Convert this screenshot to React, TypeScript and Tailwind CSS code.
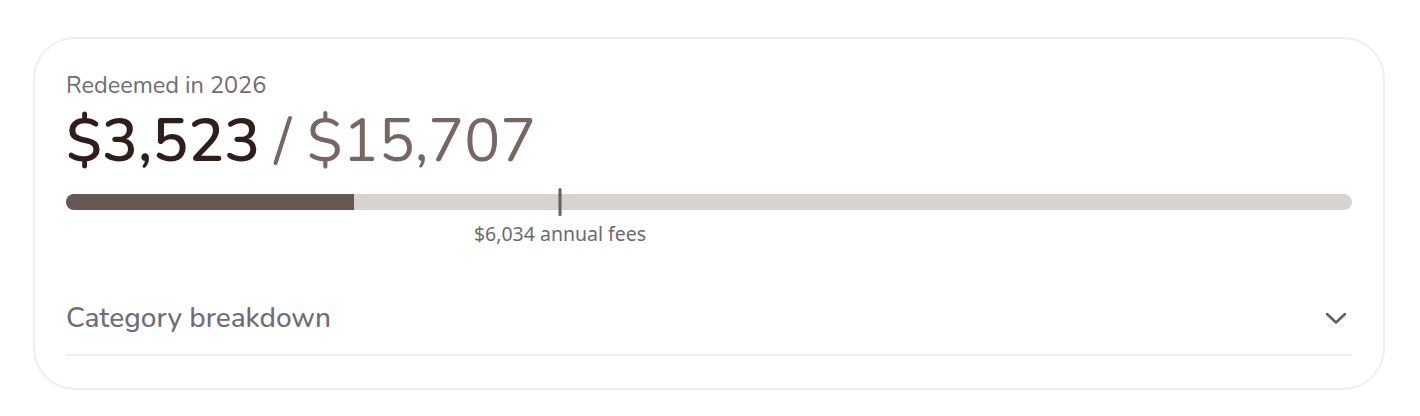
import React from "react";

const redeemed = 3523;
const total = 15707;
const fees = 6034;

export default function App() {
  const fillPct = (redeemed / total) * 100;
  const feePct = (fees / total) * 100;
  return (
    <div className="w-[1420px] h-[416px] bg-white pt-[37px] pl-[33px] pr-[35px]" style={{ fontFamily: '"Nunito", "Lato", "Noto Sans", sans-serif' }}>
      <div className="rounded-[42px] border-2 border-[#efefef] bg-white px-[31px] pt-[31px] pb-[32px]">
        <div className="text-[23.5px] leading-[30px] text-[#6f6c74]">Redeemed in 2026</div>
        <div className="mt-[11px] flex items-baseline text-[60px] leading-none">
          <span className="font-semibold text-[#2e1f1a]">$3,523</span>
          <span className="ml-[14px] text-[#766762]">/ $15,707</span>
        </div>
        <div className="relative mt-[23px] h-4 rounded-full bg-[#d8d3d0]">
          <div className="h-4 rounded-l-full bg-[#675853]" style={{ width: `${fillPct}%` }} />
          <div className="absolute top-[-6px] h-7 w-[3px] -translate-x-1/2 rounded-full bg-[#6b5a55]" style={{ left: `${feePct}%` }} />
        </div>
        <div className="relative mt-3 h-6">
          <div className="absolute top-0 -translate-x-1/2 whitespace-nowrap text-[19.5px] leading-6 text-[#6c6a6c]" style={{ left: `${feePct}%`, fontFamily: '"Noto Sans", "Open Sans", sans-serif' }}>
            $6,034 annual fees
          </div>
        </div>
        <div className="mt-[36px] flex items-center justify-between border-b-2 border-[#f0f0f0] py-5">
          <span className="text-[28px] leading-8 font-medium text-[#6e6d78]">Category breakdown</span>
          <svg width="22" height="12" viewBox="0 0 22 12" fill="none" stroke="#5e5d68" strokeWidth="2.5" strokeLinecap="round" strokeLinejoin="round" className="mr-[5px]">
            <path d="M2 2l9 8.5 9-8.5" />
          </svg>
        </div>
      </div>
    </div>
  );
}
